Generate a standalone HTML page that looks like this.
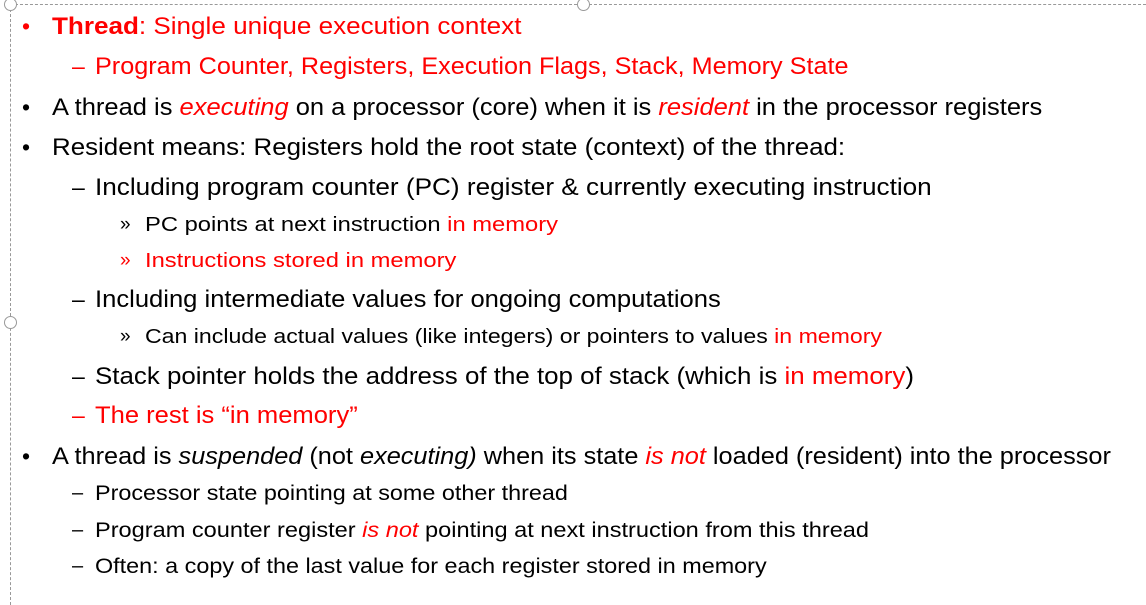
<!DOCTYPE html><html><head><meta charset="utf-8"><style>
body{margin:0;width:1146px;height:594px;background:#fff;position:relative;overflow:hidden;font-family:"Liberation Sans",sans-serif;color:#000}
.b{position:absolute;left:10px;top:4px;width:1140px;height:600px;border-left:1px dashed #999;border-top:1px dashed #999}
.h{position:absolute;width:11px;height:11px;border:1px solid #999;border-radius:50%;background:#fff}
.l{position:absolute;white-space:nowrap;line-height:1;transform-origin:0 50%}
.r{color:#f00}
.m{position:absolute;white-space:nowrap;line-height:1}
.w{position:absolute;left:0;top:2px;width:1146px;height:594px}
</style></head><body>
<div class="b"></div>
<div class="h" style="left:4px;top:-2px"></div>
<div class="h" style="left:577px;top:-2px"></div>
<div class="h" style="left:4px;top:316px"></div>
<div class="w">
<div class="m r" style="left:22px;top:13px;font-size:23px">•</div>
<div class="l r" style="left:52px;top:13px;font-size:24px;transform:scaleX(1.086)"><b>Thread</b>: Single unique execution context</div>
<div class="m r" style="left:72px;top:53px;font-size:23px">–</div>
<div class="l r" style="left:95px;top:53px;font-size:24px;transform:scaleX(1.05)">Program Counter, Registers, Execution Flags, Stack, Memory State</div>
<div class="m" style="left:22px;top:94px;font-size:23px">•</div>
<div class="l" style="left:52px;top:94px;font-size:24px;transform:scaleX(1.062)">A thread is <i class="r">executing</i> on a processor (core) when it is <i class="r">resident</i> in the processor registers</div>
<div class="m" style="left:22px;top:134px;font-size:23px">•</div>
<div class="l" style="left:52px;top:134px;font-size:24px;transform:scaleX(1.079)">Resident means: Registers hold the root state (context) of the thread:</div>
<div class="m" style="left:72px;top:174px;font-size:23px">–</div>
<div class="l" style="left:95px;top:174px;font-size:24px;transform:scaleX(1.089)">Including program counter (PC) register &amp; currently executing instruction</div>
<div class="m" style="left:120px;top:213px;font-size:19px">»</div>
<div class="l" style="left:145px;top:213px;font-size:20px;transform:scaleX(1.187)">PC points at next instruction <span class="r">in memory</span></div>
<div class="m r" style="left:120px;top:249px;font-size:19px">»</div>
<div class="l r" style="left:145px;top:249px;font-size:20px;transform:scaleX(1.187)">Instructions stored in memory</div>
<div class="m" style="left:72px;top:286px;font-size:23px">–</div>
<div class="l" style="left:95px;top:286px;font-size:24px;transform:scaleX(1.066)">Including intermediate values for ongoing computations</div>
<div class="m" style="left:120px;top:325px;font-size:19px">»</div>
<div class="l" style="left:145px;top:325px;font-size:20px;transform:scaleX(1.155)">Can include actual values (like integers) or pointers to values <span class="r">in memory</span></div>
<div class="m" style="left:72px;top:363px;font-size:23px">–</div>
<div class="l" style="left:95px;top:363px;font-size:24px;transform:scaleX(1.079)">Stack pointer holds the address of the top of stack (which is <span class="r">in memory</span>)</div>
<div class="m r" style="left:72px;top:402px;font-size:23px">–</div>
<div class="l r" style="left:95px;top:402px;font-size:24px;transform:scaleX(1.065)">The rest is “in memory”</div>
<div class="m" style="left:22px;top:443px;font-size:23px">•</div>
<div class="l" style="left:52px;top:443px;font-size:24px;transform:scaleX(1.054)">A thread is <i>suspended</i> (not <i>executing)</i> when its state <i class="r">is not</i> loaded (resident) into the processor</div>
<div class="m" style="left:72px;top:481px;font-size:20px">–</div>
<div class="l" style="left:95px;top:481px;font-size:21px;transform:scaleX(1.113)">Processor state pointing at some other thread</div>
<div class="m" style="left:72px;top:518px;font-size:20px">–</div>
<div class="l" style="left:95px;top:518px;font-size:21px;transform:scaleX(1.122)">Program counter register <i class="r">is not</i> pointing at next instruction from this thread</div>
<div class="m" style="left:72px;top:554px;font-size:20px">–</div>
<div class="l" style="left:95px;top:554px;font-size:21px;transform:scaleX(1.113)">Often: a copy of the last value for each register stored in memory</div>
</div>
</body></html>
